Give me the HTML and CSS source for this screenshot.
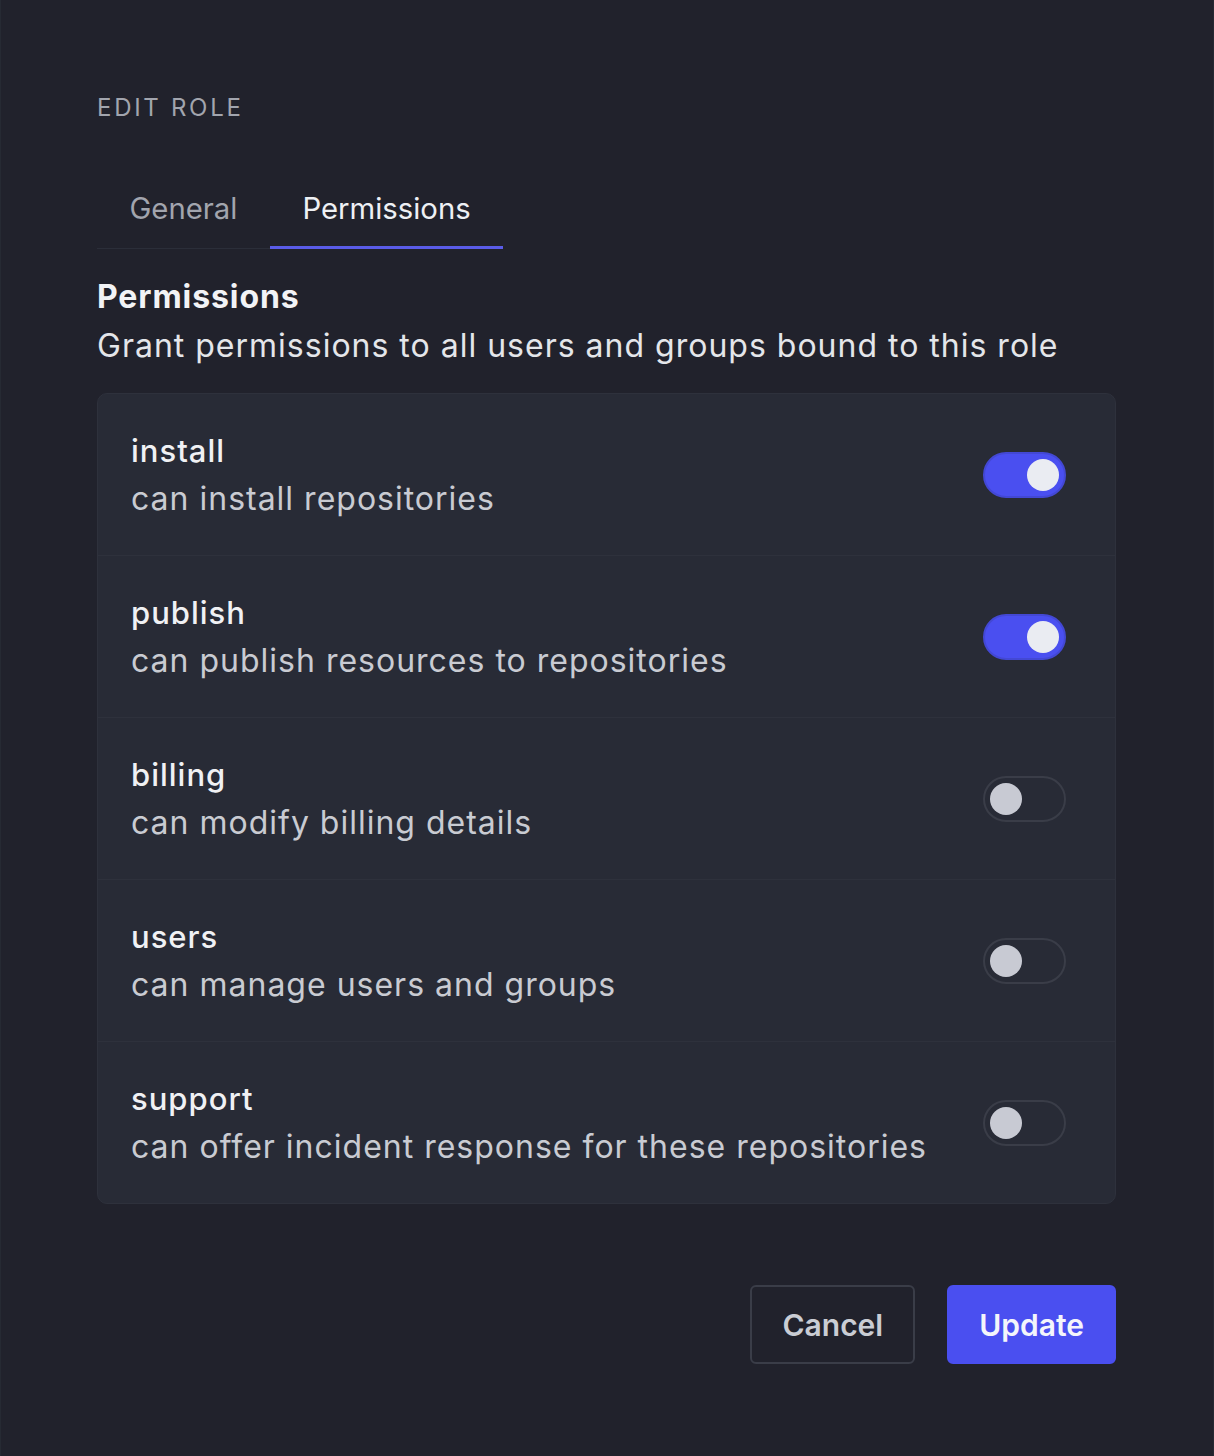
FILE: index.html
```html
<!DOCTYPE html>
<html lang="en">
<head>
<meta charset="utf-8">
<title>Edit role</title>
<link rel="stylesheet" href="styles.css">
</head>
<body>
<main class="page">
  <div class="eyebrow">Edit role</div>
  <nav class="tabs">
    <div class="tab">General</div>
    <div class="tab active">Permissions</div>
  </nav>
  <h2 class="heading">Permissions</h2>
  <p class="sub">Grant permissions to all users and groups bound to this role</p>
  <section class="card">
    <div class="row">
      <div class="info"><div class="name">install</div><div class="desc">can install repositories</div></div>
      <span class="toggle on"><span class="knob"></span></span>
    </div>
    <div class="row">
      <div class="info"><div class="name">publish</div><div class="desc">can publish resources to repositories</div></div>
      <span class="toggle on"><span class="knob"></span></span>
    </div>
    <div class="row">
      <div class="info"><div class="name">billing</div><div class="desc">can modify billing details</div></div>
      <span class="toggle"><span class="knob"></span></span>
    </div>
    <div class="row">
      <div class="info"><div class="name">users</div><div class="desc">can manage users and groups</div></div>
      <span class="toggle"><span class="knob"></span></span>
    </div>
    <div class="row">
      <div class="info"><div class="name">support</div><div class="desc">can offer incident response for these repositories</div></div>
      <span class="toggle"><span class="knob"></span></span>
    </div>
  </section>
  <div class="actions">
    <button class="btn cancel">Cancel</button>
    <button class="btn primary">Update</button>
  </div>
</main>
</body>
</html>
```

FILE: styles.css
```css
* { box-sizing: border-box; }
html, body {
  margin: 0;
  padding: 0;
  background: #21222c;
}
body {
  font-family: Inter, "Noto Sans", sans-serif;
  color: #eceef2;
  min-height: 1456px;
  border-left: 1px solid #262a33;
  border-right: 1px solid #262a33;
}
.page {
  padding: 92px 97px 0 96px;
}
.eyebrow {
  font-size: 24px;
  line-height: 32px;
  letter-spacing: 2.7px;
  text-transform: uppercase;
  color: #a2a5ae;
}
.tabs {
  display: flex;
  width: fit-content;
  margin-top: 67px;
  border-bottom: 1px solid #2b2e39;
}
.tab {
  font-size: 29.3px;
  line-height: 36px;
  padding: 0 32.5px 19px;
  margin-bottom: -1px;
  border-bottom: 3px solid transparent;
  color: #a2a5ae;
}
.tab.active {
  color: #eef0f4;
  border-bottom-color: #5a5ce8;
}
.heading {
  margin: 24px 0 0;
  font-size: 32px;
  line-height: 48px;
  font-weight: 700;
  color: #f2f3f6;
  letter-spacing: 0.9px;
}
.sub {
  margin: 1px 0 0;
  font-size: 32px;
  line-height: 48px;
  color: #e4e6ea;
  letter-spacing: 1px;
}
.card {
  margin-top: 23px;
  background: #282b36;
  border: 1px solid #2e313c;
  border-radius: 10px;
}
.row {
  display: flex;
  align-items: center;
  justify-content: space-between;
  padding: 33px 49px 32px 33px;
}
.row + .row {
  border-top: 1px solid #2e313c;
}
.name {
  font-size: 31px;
  line-height: 48px;
  font-weight: 500;
  color: #f0f1f4;
  letter-spacing: 1px;
}
.desc {
  font-size: 32px;
  line-height: 48px;
  color: #c9cbd2;
  letter-spacing: 1px;
}
.toggle {
  width: 83px;
  height: 46px;
  border-radius: 23px;
  border: 2px solid #3a3d48;
  padding: 5px;
  display: flex;
  align-items: center;
}
.toggle .knob {
  width: 32px;
  height: 32px;
  border-radius: 50%;
  background: #c8cad3;
}
.toggle.on {
  background: #4a4ff0;
  border-color: #4348d4;
  justify-content: flex-end;
}
.toggle.on .knob {
  background: #eaecf2;
}
.actions {
  display: flex;
  justify-content: flex-end;
  gap: 32px;
  margin-top: 81px;
}
.btn {
  font-family: Inter, "Noto Sans", sans-serif;
  font-size: 30px;
  font-weight: 600;
  height: 79px;
  padding: 0 30px;
  border-radius: 6px;
}
.btn.cancel {
  background: transparent;
  color: #cacdd4;
  border: 2px solid #3a3d48;
}
.btn.primary {
  background: #4a4ff0;
  color: #f4f5fb;
  border: 2px solid #4a4ff0;
}
```
